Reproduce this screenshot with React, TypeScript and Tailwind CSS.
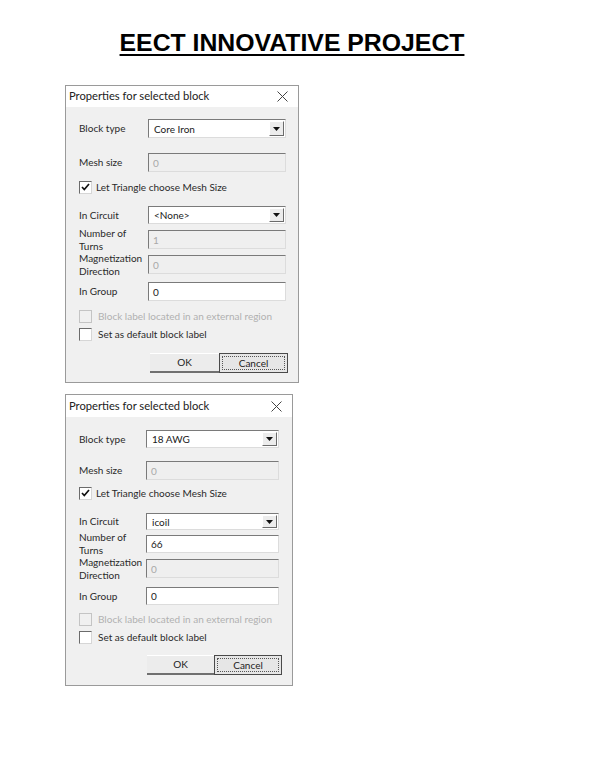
import React from "react"

type Field = {
    label: string[]
    value: string
    kind: "select" | "text" | "disabled"
    rowClass: string
}

type DialogSpec = {
    frame: string
    titleBar: string
    body: string
    labelCol: string
    boxWidth: string
    fields: Field[]
    checkRow1: string
    checkRow2: string
    checkRow3: string
    buttons: string
    okBtn: string
    cancelBtn: string
}

const uiFont = { fontFamily: 'Lato, "Noto Sans", sans-serif' }

const CloseIcon = () => (
    <svg width="11" height="11" viewBox="0 0 11 11" className="text-[#444]">
        <path d="M0.5 0.5 L10.5 10.5 M10.5 0.5 L0.5 10.5" stroke="currentColor" strokeWidth="1" fill="none" />
    </svg>
)

const DropArrow = () => (
    <div className="flex h-full w-[15px] items-center justify-center border-t border-l border-t-white border-l-white border-r border-b border-r-[#6b6b6b] border-b-[#6b6b6b] bg-[#ececec]">
        <svg width="7" height="4" viewBox="0 0 7 4">
            <path d="M0 0 L7 0 L3.5 4 Z" fill="#111" />
        </svg>
    </div>
)

const Box = ({ field, width }: { field: Field; width: string }) => {
    const sunken = "border-t border-l border-t-[#7a7a7a] border-l-[#7a7a7a] border-r border-b border-r-[#dcdcdc] border-b-[#dcdcdc]"
    if (field.kind === "select") {
        return (
            <div className={`${width} ${sunken} flex h-full items-stretch bg-white p-[1px]`}>
                <span className="flex flex-1 items-center pl-[4px] text-[10px] leading-none text-[#1a1a1a]">{field.value}</span>
                <DropArrow />
            </div>
        )
    }
    const bg = field.kind === "disabled" ? "bg-[#efefef] text-[#a8a8a8]" : "bg-white text-[#1a1a1a]"
    return (
        <div className={`${width} ${sunken} ${bg} flex h-full items-center pl-[4px] text-[10px] leading-none`}>
            {field.value}
        </div>
    )
}

const CheckBox = ({ checked, disabled }: { checked?: boolean; disabled?: boolean }) => (
    <div
        className={`flex h-[13px] w-[13px] shrink-0 items-center justify-center border ${
            disabled ? "border-[#c4c4c4] bg-[#f0f0f0]" : "border-t-[#6b6b6b] border-l-[#6b6b6b] border-r-[#d6d6d6] border-b-[#d6d6d6] bg-white"
        }`}
    >
        {checked && (
            <svg width="9" height="8" viewBox="0 0 9 8">
                <path d="M1 4 L3.3 6.5 L8 1" stroke="#111" strokeWidth="1.7" fill="none" />
            </svg>
        )}
    </div>
)

const FieldRow = ({ field, spec }: { field: Field; spec: DialogSpec }) => (
    <div className={`${field.rowClass} flex items-center`}>
        <div className={`${spec.labelCol} whitespace-nowrap text-[10px] leading-[13px] text-[#2a2a2a]`}>
            {field.label.map((l) => <div key={l}>{l}</div>)}
        </div>
        <Box field={field} width={spec.boxWidth} />
    </div>
)

const Dialog = ({ spec }: { spec: DialogSpec }) => (
    <div className={`${spec.frame} flex flex-col border border-[#9a9a9a] bg-[#f0f0f0]`} style={uiFont}>
        <div className={`${spec.titleBar} flex items-center justify-between bg-white pl-[3px] pr-[10px]`}>
            <span className="text-[11.2px] text-[#222]">Properties for selected block</span>
            <CloseIcon />
        </div>
        <div className={`${spec.body} flex flex-col`}>
            {spec.fields.slice(0, 2).map((f) => (
                <FieldRow key={f.label.join()} field={f} spec={spec} />
            ))}

            <div className={`${spec.checkRow1} flex items-center gap-[4px] text-[10px] text-[#2a2a2a]`}>
                <CheckBox checked />
                <span>Let Triangle choose Mesh Size</span>
            </div>

            {spec.fields.slice(2).map((f) => (
                <FieldRow key={f.label.join()} field={f} spec={spec} />
            ))}

            <div className={`${spec.checkRow2} flex items-center gap-[6px] whitespace-nowrap text-[10px] text-[#b0b0b0]`}>
                <CheckBox disabled />
                <span>Block label located in an external region</span>
            </div>
            <div className={`${spec.checkRow3} flex items-center gap-[6px] text-[10px] text-[#2a2a2a]`}>
                <CheckBox />
                <span>Set as default block label</span>
            </div>

            <div className={`${spec.buttons} flex`}>
                <div className={`${spec.okBtn} flex items-center justify-center border-t border-t-white border-b-2 border-b-[#707070] bg-[#ececec] text-[10px] text-[#222]`}>
                    OK
                </div>
                <div className={`${spec.cancelBtn} border border-[#4a4a4a] bg-[#e6e6e6] p-[2px]`}>
                    <div className="flex h-full w-full items-center justify-center border border-dotted border-[#555] text-[10px] text-[#222]">
                        Cancel
                    </div>
                </div>
            </div>
        </div>
    </div>
)

const first: DialogSpec = {
    frame: "w-[234px] h-[298px]",
    titleBar: "h-[21px]",
    body: "pl-[13px]",
    labelCol: "w-[69px]",
    boxWidth: "w-[138px]",
    fields: [
        { label: ["Block type"], value: "Core Iron", kind: "select", rowClass: "mt-[12px] h-[19px]" },
        { label: ["Mesh size"], value: "0", kind: "disabled", rowClass: "mt-[15px] h-[19px]" },
        { label: ["In Circuit"], value: "<None>", kind: "select", rowClass: "mt-[12px] h-[18px]" },
        { label: ["Number of", "Turns"], value: "1", kind: "disabled", rowClass: "mt-[6px] h-[19px]" },
        { label: ["Magnetization", "Direction"], value: "0", kind: "disabled", rowClass: "mt-[6px] h-[19px]" },
        { label: ["In Group"], value: "0", kind: "text", rowClass: "mt-[8px] h-[19px]" },
    ],
    checkRow1: "mt-[8px] h-[14px]",
    checkRow2: "mt-[8px] h-[14px]",
    checkRow3: "mt-[4px] h-[14px]",
    buttons: "mt-[12px] pl-[71px]",
    okBtn: "w-[69px] h-[20px]",
    cancelBtn: "w-[69px] h-[20px]",
}

const second: DialogSpec = {
    frame: "w-[228px] h-[292px]",
    titleBar: "h-[22px]",
    body: "pl-[13px]",
    labelCol: "w-[67px]",
    boxWidth: "w-[133px]",
    fields: [
        { label: ["Block type"], value: "18 AWG", kind: "select", rowClass: "mt-[13px] h-[18px]" },
        { label: ["Mesh size"], value: "0", kind: "disabled", rowClass: "mt-[13px] h-[19px]" },
        { label: ["In Circuit"], value: "icoil", kind: "select", rowClass: "mt-[13px] h-[17px]" },
        { label: ["Number of", "Turns"], value: "66", kind: "text", rowClass: "mt-[5px] h-[18px]" },
        { label: ["Magnetization", "Direction"], value: "0", kind: "disabled", rowClass: "mt-[6px] h-[19px]" },
        { label: ["In Group"], value: "0", kind: "text", rowClass: "mt-[9px] h-[18px]" },
    ],
    checkRow1: "mt-[6px] h-[14px]",
    checkRow2: "mt-[7px] h-[14px]",
    checkRow3: "mt-[4px] h-[14px]",
    buttons: "mt-[11px] pl-[68px]",
    okBtn: "w-[67px] h-[20px]",
    cancelBtn: "w-[68px] h-[20px]",
}

const App = () => {
    return (
        <div className="min-h-[757px] w-[590px] bg-white">
            <div className="flex justify-center pt-[29px] pr-[6px]">
                <h1
                    className="text-[24.8px] font-bold leading-[28px] text-black underline decoration-2 underline-offset-[3px]"
                    style={{ fontFamily: '"Liberation Sans", Arial, sans-serif' }}
                >
                    EECT INNOVATIVE PROJECT
                </h1>
            </div>

            <div className="mt-[28px] flex flex-col gap-[11px] pl-[65px]">
                <Dialog spec={first} />
                <Dialog spec={second} />
            </div>
        </div>
    )
}

export default App
